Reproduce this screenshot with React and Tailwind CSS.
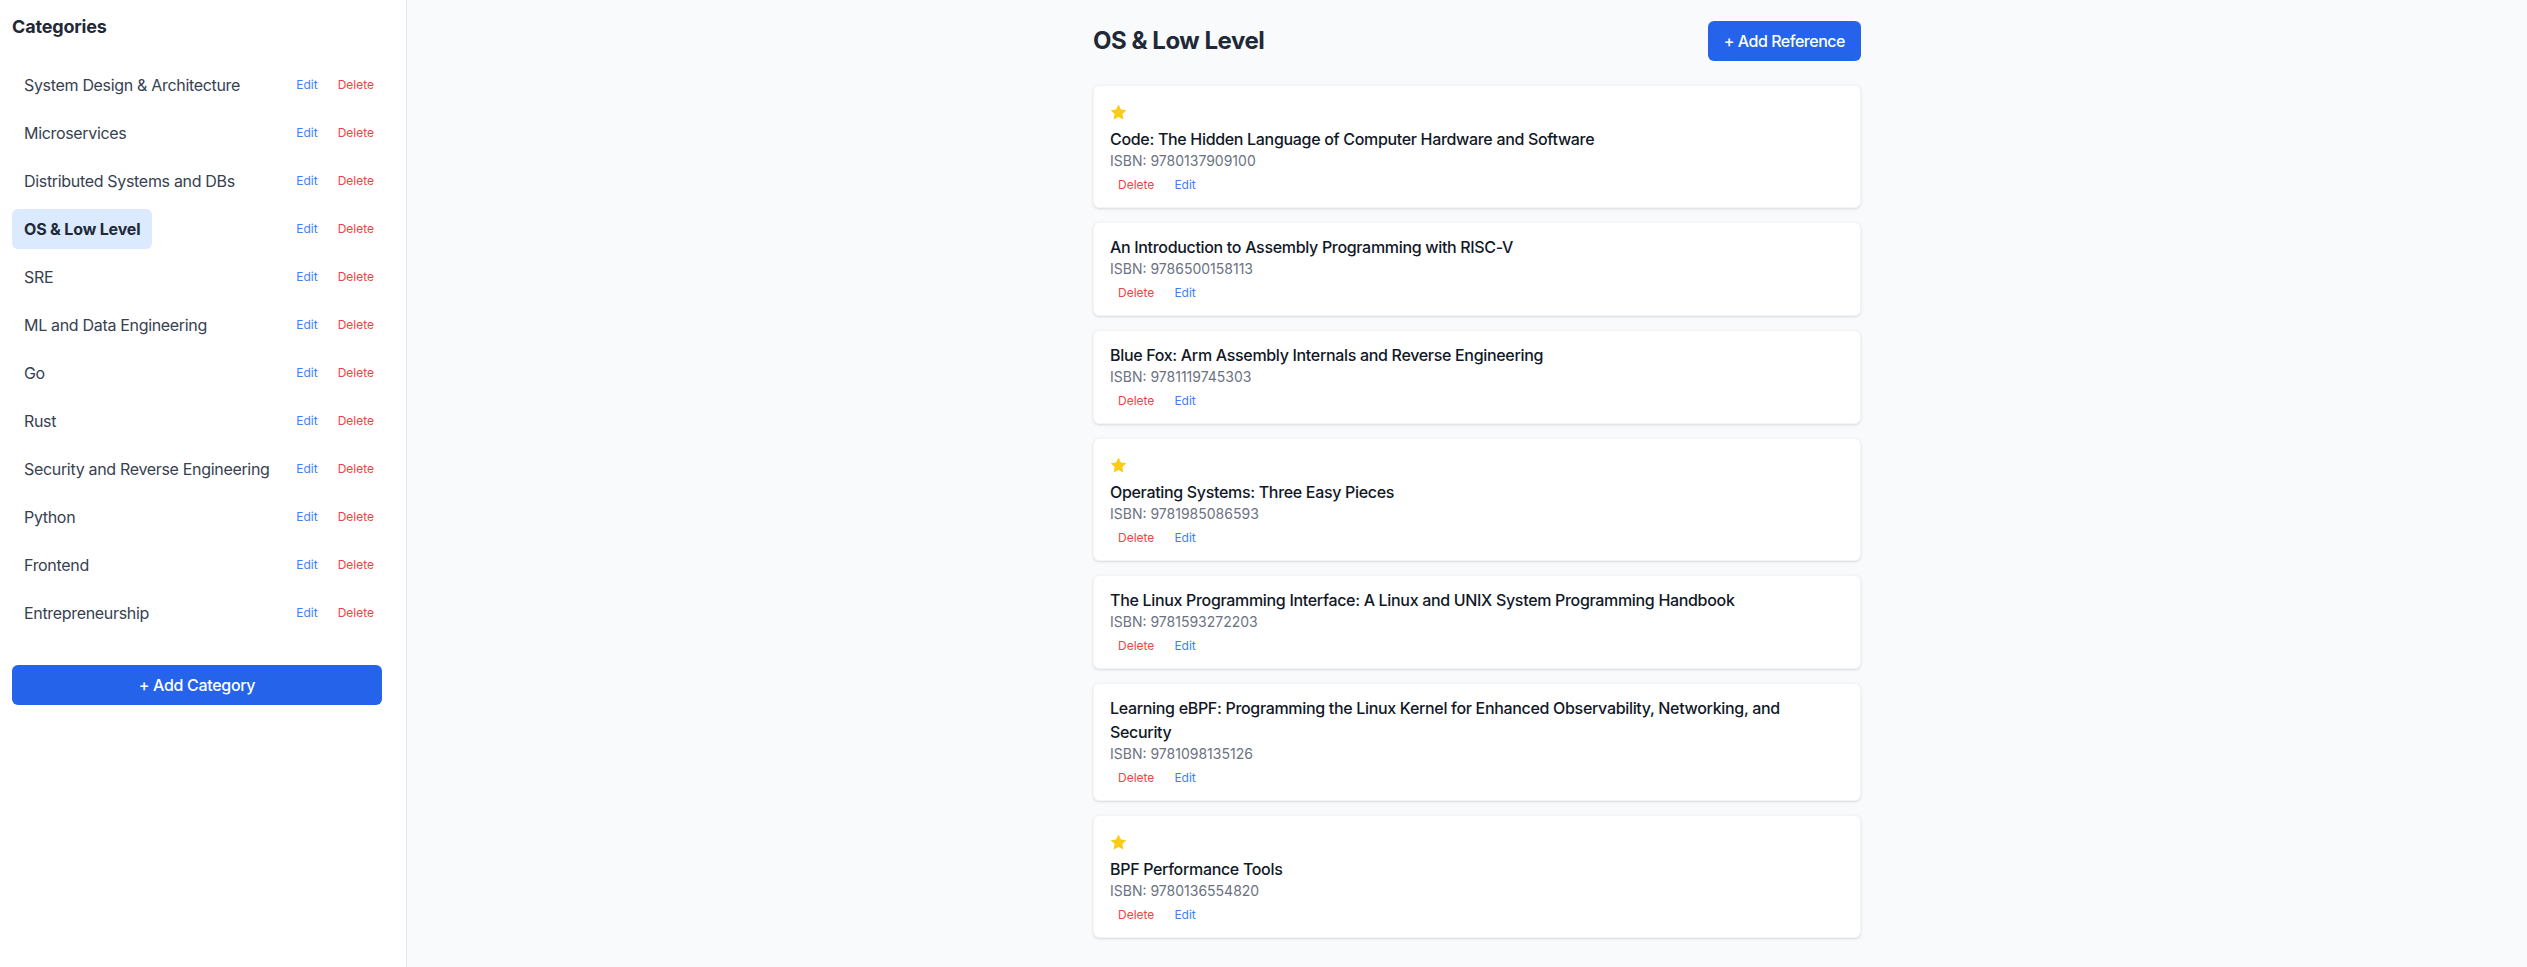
import React, { useState } from 'react';

const categories = [
  'System Design & Architecture',
  'Microservices',
  'Distributed Systems and DBs',
  'OS & Low Level',
  'SRE',
  'ML and Data Engineering',
  'Go',
  'Rust',
  'Security and Reverse Engineering',
  'Python',
  'Frontend',
  'Entrepreneurship',
];

const books = [
  { title: 'Code: The Hidden Language of Computer Hardware and Software', isbn: '9780137909100', fav: true },
  { title: 'An Introduction to Assembly Programming with RISC-V', isbn: '9786500158113' },
  { title: 'Blue Fox: Arm Assembly Internals and Reverse Engineering', isbn: '9781119745303' },
  { title: 'Operating Systems: Three Easy Pieces', isbn: '9781985086593', fav: true },
  { title: 'The Linux Programming Interface: A Linux and UNIX System Programming Handbook', isbn: '9781593272203' },
  { title: 'Learning eBPF: Programming the Linux Kernel for Enhanced Observability, Networking, and Security', isbn: '9781098135126' },
  { title: 'BPF Performance Tools', isbn: '9780136554820', fav: true },
];

function StarIcon() {
  return (
    <svg className="w-[17px] h-[17px] text-[#facc15]" viewBox="0 0 24 24" fill="currentColor">
      <path d="M12 0.8l3.4 7 7.7 1-5.6 5.4 1.4 7.7L12 18.2l-6.9 3.7 1.4-7.7L0.9 8.8l7.7-1L12 0.8z" />
    </svg>
  );
}

export default function App() {
  const [active, setActive] = useState('OS & Low Level');

  return (
    <div className="flex h-screen font-['Inter',sans-serif] bg-[#f9fafb]">
      <aside className="w-[407px] shrink-0 bg-white border-r border-[#e5e7eb] pl-3 pr-6 pt-[13px] overflow-y-auto">
        <h2 className="text-lg font-bold text-[#1f2937] tracking-[-0.01em] mb-6">Categories</h2>
        <ul className="space-y-2">
          {categories.map((c) => (
            <li key={c} className="flex items-center justify-between">
              <button
                onClick={() => setActive(c)}
                className={`px-3 py-2 rounded-md text-left text-base whitespace-nowrap ${
                  active === c
                    ? 'bg-[#dbeafe] font-bold text-[#1f2937] tracking-[-0.01em]'
                    : 'text-[#374151] tracking-[-0.02em]'
                }`}
              >
                {c}
              </button>
              <div className="flex gap-1 text-xs shrink-0">
                <button className="px-2 text-[#3b82f6]">Edit</button>
                <button className="px-2 text-[#ef4444]">Delete</button>
              </div>
            </li>
          ))}
        </ul>
        <button className="mt-8 w-full h-10 rounded-md bg-[#2563eb] text-white font-medium tracking-[-0.02em]">
          + Add Category
        </button>
      </aside>

      <main className="flex-1 overflow-y-auto pl-5 pt-[21px] pb-6">
        <div className="max-w-3xl mx-auto">
          <div className="flex items-center justify-between mb-6">
            <h1 className="text-2xl font-bold text-[#1f2937] tracking-[-0.02em]">{active}</h1>
            <button className="h-10 px-4 rounded-md bg-[#2563eb] text-white font-medium tracking-[-0.03em]">
              + Add Reference
            </button>
          </div>

          <div className="space-y-3.5">
            {books.map((b) => (
              <div key={b.isbn} className="bg-white rounded-md border border-[#f3f4f6] shadow-sm px-4 py-3">
                {b.fav && (
                  <div className="h-[29px] flex items-center">
                    <StarIcon />
                  </div>
                )}
                <div className="text-base font-medium text-[#111827] tracking-[-0.02em]">{b.title}</div>
                <div className="text-sm text-[#6b7280]">ISBN: {b.isbn}</div>
                <div className="mt-1 flex gap-1 text-xs">
                  <button className="px-2 py-0.5 text-[#ef4444]">Delete</button>
                  <button className="px-2 py-0.5 text-[#3b82f6]">Edit</button>
                </div>
              </div>
            ))}
          </div>
        </div>
      </main>
    </div>
  );
}
